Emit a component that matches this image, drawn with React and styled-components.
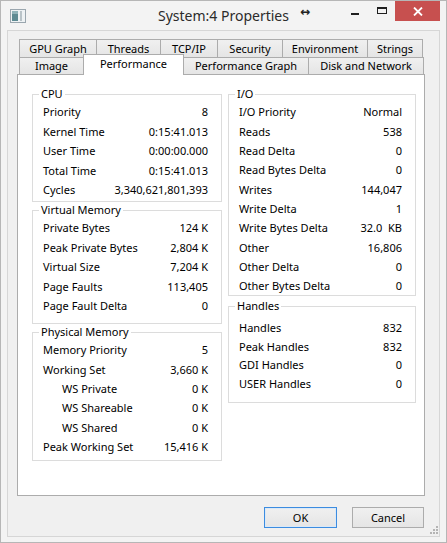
import React from "react";
import styled, { createGlobalStyle } from "styled-components";

const GlobalStyle = createGlobalStyle`
  html, body {
    margin: 0;
    padding: 0;
    background: #ffffff;
  }
  body {
    font-family: "Noto Sans", "Open Sans", sans-serif;
    font-size: 11px;
    color: #000;
  }
`;

const cpu = [
  ["Priority", "8"],
  ["Kernel Time", "0:15:41.013"],
  ["User Time", "0:00:00.000"],
  ["Total Time", "0:15:41.013"],
  ["Cycles", "3,340,621,801,393"],
];

const virtualMemory = [
  ["Private Bytes", "124 K"],
  ["Peak Private Bytes", "2,804 K"],
  ["Virtual Size", "7,204 K"],
  ["Page Faults", "113,405"],
  ["Page Fault Delta", "0"],
];

const physicalMemory = [
  ["Memory Priority", "5"],
  ["Working Set", "3,660 K"],
  ["WS Private", "0 K", true],
  ["WS Shareable", "0 K", true],
  ["WS Shared", "0 K", true],
  ["Peak Working Set", "15,416 K"],
];

const io = [
  ["I/O Priority", "Normal"],
  ["Reads", "538"],
  ["Read Delta", "0"],
  ["Read Bytes Delta", "0"],
  ["Writes", "144,047"],
  ["Write Delta", "1"],
  ["Write Bytes Delta", "32.0  KB"],
  ["Other", "16,806"],
  ["Other Delta", "0"],
  ["Other Bytes Delta", "0"],
];

const handles = [
  ["Handles", "832"],
  ["Peak Handles", "832"],
  ["GDI Handles", "0"],
  ["USER Handles", "0"],
];

const topTabs = [
  ["GPU Graph", 78],
  ["Threads", 65],
  ["TCP/IP", 58],
  ["Security", 66],
  ["Environment", 86],
  ["Strings", 56],
];

const bottomTabs = [
  ["Image", 65],
  ["Performance", 101, true],
  ["Performance Graph", 126],
  ["Disk and Network", 116],
];

const WindowIcon = () => (
  <svg width="16" height="14" viewBox="0 0 16 14">
    <rect x="0.5" y="0.5" width="15" height="13" fill="#eef2f4" stroke="#9aa6ae" />
    <rect x="2" y="2" width="6" height="10" fill="#5d8a92" />
    <rect x="2" y="2" width="6" height="3" fill="#8fb2b8" />
    <rect x="10" y="2" width="2" height="10" fill="#b9c3c8" />
  </svg>
);

const SizeGrip = () => (
  <svg width="8" height="8" viewBox="0 0 8 8">
    <g fill="#b4b4b4">
      <rect x="6" y="0" width="2" height="2" />
      <rect x="3" y="3" width="2" height="2" />
      <rect x="6" y="3" width="2" height="2" />
      <rect x="0" y="6" width="2" height="2" />
      <rect x="3" y="6" width="2" height="2" />
      <rect x="6" y="6" width="2" height="2" />
    </g>
  </svg>
);

function Group({ title, rows, h, rowH = 19.4, top = 0, mt = 0 }) {
  return (
    <Fieldset h={h} mt={mt}>
      <Legend>{title}</Legend>
      <Rows top={top}>
        {rows.map(([label, value, indent]) => (
          <Row key={label} h={rowH}>
            <Label indent={indent}>{label}</Label>
            <span>{value}</span>
          </Row>
        ))}
      </Rows>
    </Fieldset>
  );
}

export default function App() {
  return (
    <>
      <GlobalStyle />
      <Window>
        <TitleBar>
          <TitleLeft>
            <WindowIcon />
          </TitleLeft>
          <Title>System:4 Properties</Title>
          <TitleRight>
            <Arrows>↔</Arrows>
            <Controls>
              <CtrlButton>
                <MinGlyph />
              </CtrlButton>
              <CtrlButton>
                <MaxGlyph />
              </CtrlButton>
              <CloseButton>
                <svg width="10" height="9" viewBox="0 0 10 9">
                  <path d="M1 0.5 L9 8.5 M9 0.5 L1 8.5" stroke="#fff" strokeWidth="1.8" />
                </svg>
              </CloseButton>
            </Controls>
          </TitleRight>
        </TitleBar>

        <Client>
          <TabStrip>
            <TabRow>
              {topTabs.map(([name, w]) => (
                <Tab key={name} w={w} h={18}>
                  {name}
                </Tab>
              ))}
            </TabRow>
            <TabRow>
              {bottomTabs.map(([name, w, active]) => (
                <Tab key={name} w={w} h={17} active={active}>
                  {name}
                </Tab>
              ))}
            </TabRow>
          </TabStrip>

          <Panel>
            <Columns>
              <Column>
                <Group title="CPU" rows={cpu} h={116} rowH={19.5} />
                <Group title="Virtual Memory" rows={virtualMemory} h={122} rowH={19.5} />
                <Group title="Physical Memory" rows={physicalMemory} h={137} rowH={19.4} />
              </Column>
              <Column>
                <Group title="I/O" rows={io} h={210} rowH={19.35} />
                <Group title="Handles" rows={handles} h={105} rowH={18.7} top={4} mt={2} />
              </Column>
            </Columns>
          </Panel>

          <Footer>
            <DialogButton w={73} primary>
              OK
            </DialogButton>
            <DialogButton w={72}>Cancel</DialogButton>
            <Grip>
              <SizeGrip />
            </Grip>
          </Footer>
        </Client>
      </Window>
    </>
  );
}

const Window = styled.div`
  width: 447px;
  height: 543px;
  box-sizing: border-box;
  border: 1px solid #b6b6b6;
  background: #f3f3f3;
  padding: 0 6px 5px 6px;
  display: flex;
  flex-direction: column;
`;

const TitleBar = styled.div`
  height: 29px;
  flex-shrink: 0;
  display: grid;
  grid-template-columns: 1fr auto 1fr;
  align-items: start;
`;

const TitleLeft = styled.div`
  padding: 8px 0 0 3px;
  display: flex;
`;

const Title = styled.div`
  font-family: "Noto Sans", "Open Sans", sans-serif;
  font-size: 14px;
  line-height: 29px;
  color: #2b2b2b;
  white-space: nowrap;
`;

const TitleRight = styled.div`
  display: flex;
  align-items: flex-start;
`;

const Arrows = styled.span`
  font-family: "DejaVu Sans", sans-serif;
  font-size: 12px;
  font-weight: bold;
  line-height: 22px;
  margin-left: 11px;
  color: #222;
`;

const Controls = styled.div`
  margin-left: auto;
  display: flex;
`;

const CtrlButton = styled.div`
  width: 27px;
  height: 20px;
  display: flex;
  align-items: center;
  justify-content: center;
`;

const MinGlyph = styled.div`
  width: 8px;
  height: 2px;
  margin-top: 6px;
  background: #1f1f1f;
`;

const MaxGlyph = styled.div`
  width: 10px;
  height: 7px;
  box-sizing: border-box;
  border: 1px solid #1f1f1f;
  border-top-width: 2px;
  margin-top: -1px;
`;

const CloseButton = styled.div`
  width: 45px;
  height: 20px;
  background: #c7504f;
  display: flex;
  align-items: center;
  justify-content: center;
`;

const Client = styled.div`
  flex: 1;
  box-sizing: border-box;
  border: 1px solid #d6d6d6;
  background: #f0f0f0;
  padding: 8px 14px 0 9px;
  display: flex;
  flex-direction: column;
`;

const TabStrip = styled.div`
  display: flex;
  flex-direction: column;
`;

const TabRow = styled.div`
  display: flex;
  align-items: flex-start;
  padding-left: 2px;
`;

const Tab = styled.div`
  position: relative;
  box-sizing: border-box;
  width: ${(p) => p.w}px;
  height: ${(p) => (p.active ? 21 : p.h)}px;
  margin-left: -1px;
  margin-top: ${(p) => (p.active ? -3 : 0)}px;
  margin-bottom: ${(p) => (p.active ? -1 : 0)}px;
  padding-bottom: ${(p) => (p.active ? 3 : 1)}px;
  z-index: ${(p) => (p.active ? 2 : 1)};
  border: 1px solid #acacac;
  border-bottom: none;
  background: ${(p) =>
    p.active ? "#ffffff" : "linear-gradient(#f0f0f0, #e5e5e5)"};
  display: flex;
  align-items: center;
  justify-content: center;
  white-space: nowrap;
  font-size: 11px;

  &:first-child {
    margin-left: 0;
  }
`;

const Panel = styled.div`
  height: 422px;
  flex-shrink: 0;
  box-sizing: border-box;
  border: 1px solid #acacac;
  background: #ffffff;
  padding: 11px 0 0 14px;
`;

const Columns = styled.div`
  display: grid;
  grid-template-columns: 190px 188px;
  column-gap: 6px;
  align-items: start;
`;

const Column = styled.div`
  display: flex;
  flex-direction: column;
`;

const Fieldset = styled.fieldset`
  margin: ${(p) => p.mt}px 0 0 0;
  padding: 0;
  min-width: 0;
  box-sizing: border-box;
  height: ${(p) => p.h}px;
  border: 1px solid #dcdcdc;
`;

const Legend = styled.legend`
  margin-left: 6px;
  padding: 0 2px;
  line-height: 16px;
  font-size: 11px;
`;

const Rows = styled.div`
  padding: ${(p) => p.top}px 13px 0 10px;
`;

const Row = styled.div`
  height: ${(p) => p.h}px;
  display: flex;
  align-items: center;
  justify-content: space-between;
  white-space: pre;
`;

const Label = styled.span`
  padding-left: ${(p) => (p.indent ? 19 : 0)}px;
`;

const Footer = styled.div`
  position: relative;
  flex: 1;
  display: flex;
  justify-content: flex-end;
  align-items: flex-start;
  gap: 15px;
  padding: 11px 1px 0 0;
`;

const DialogButton = styled.button`
  width: ${(p) => p.w}px;
  height: 21px;
  box-sizing: border-box;
  margin: 0;
  padding: 0;
  border: 1px solid ${(p) => (p.primary ? "#3c8ce0" : "#acacac")};
  background: linear-gradient(#f0f0f0, #e5e5e5);
  box-shadow: ${(p) => (p.primary ? "inset 0 0 0 1px #dbe9f7" : "none")};
  font-family: "Noto Sans", "Open Sans", sans-serif;
  font-size: 11px;
  color: #000;
`;

const Grip = styled.div`
  position: absolute;
  right: -13px;
  bottom: 2px;
  display: flex;
`;
